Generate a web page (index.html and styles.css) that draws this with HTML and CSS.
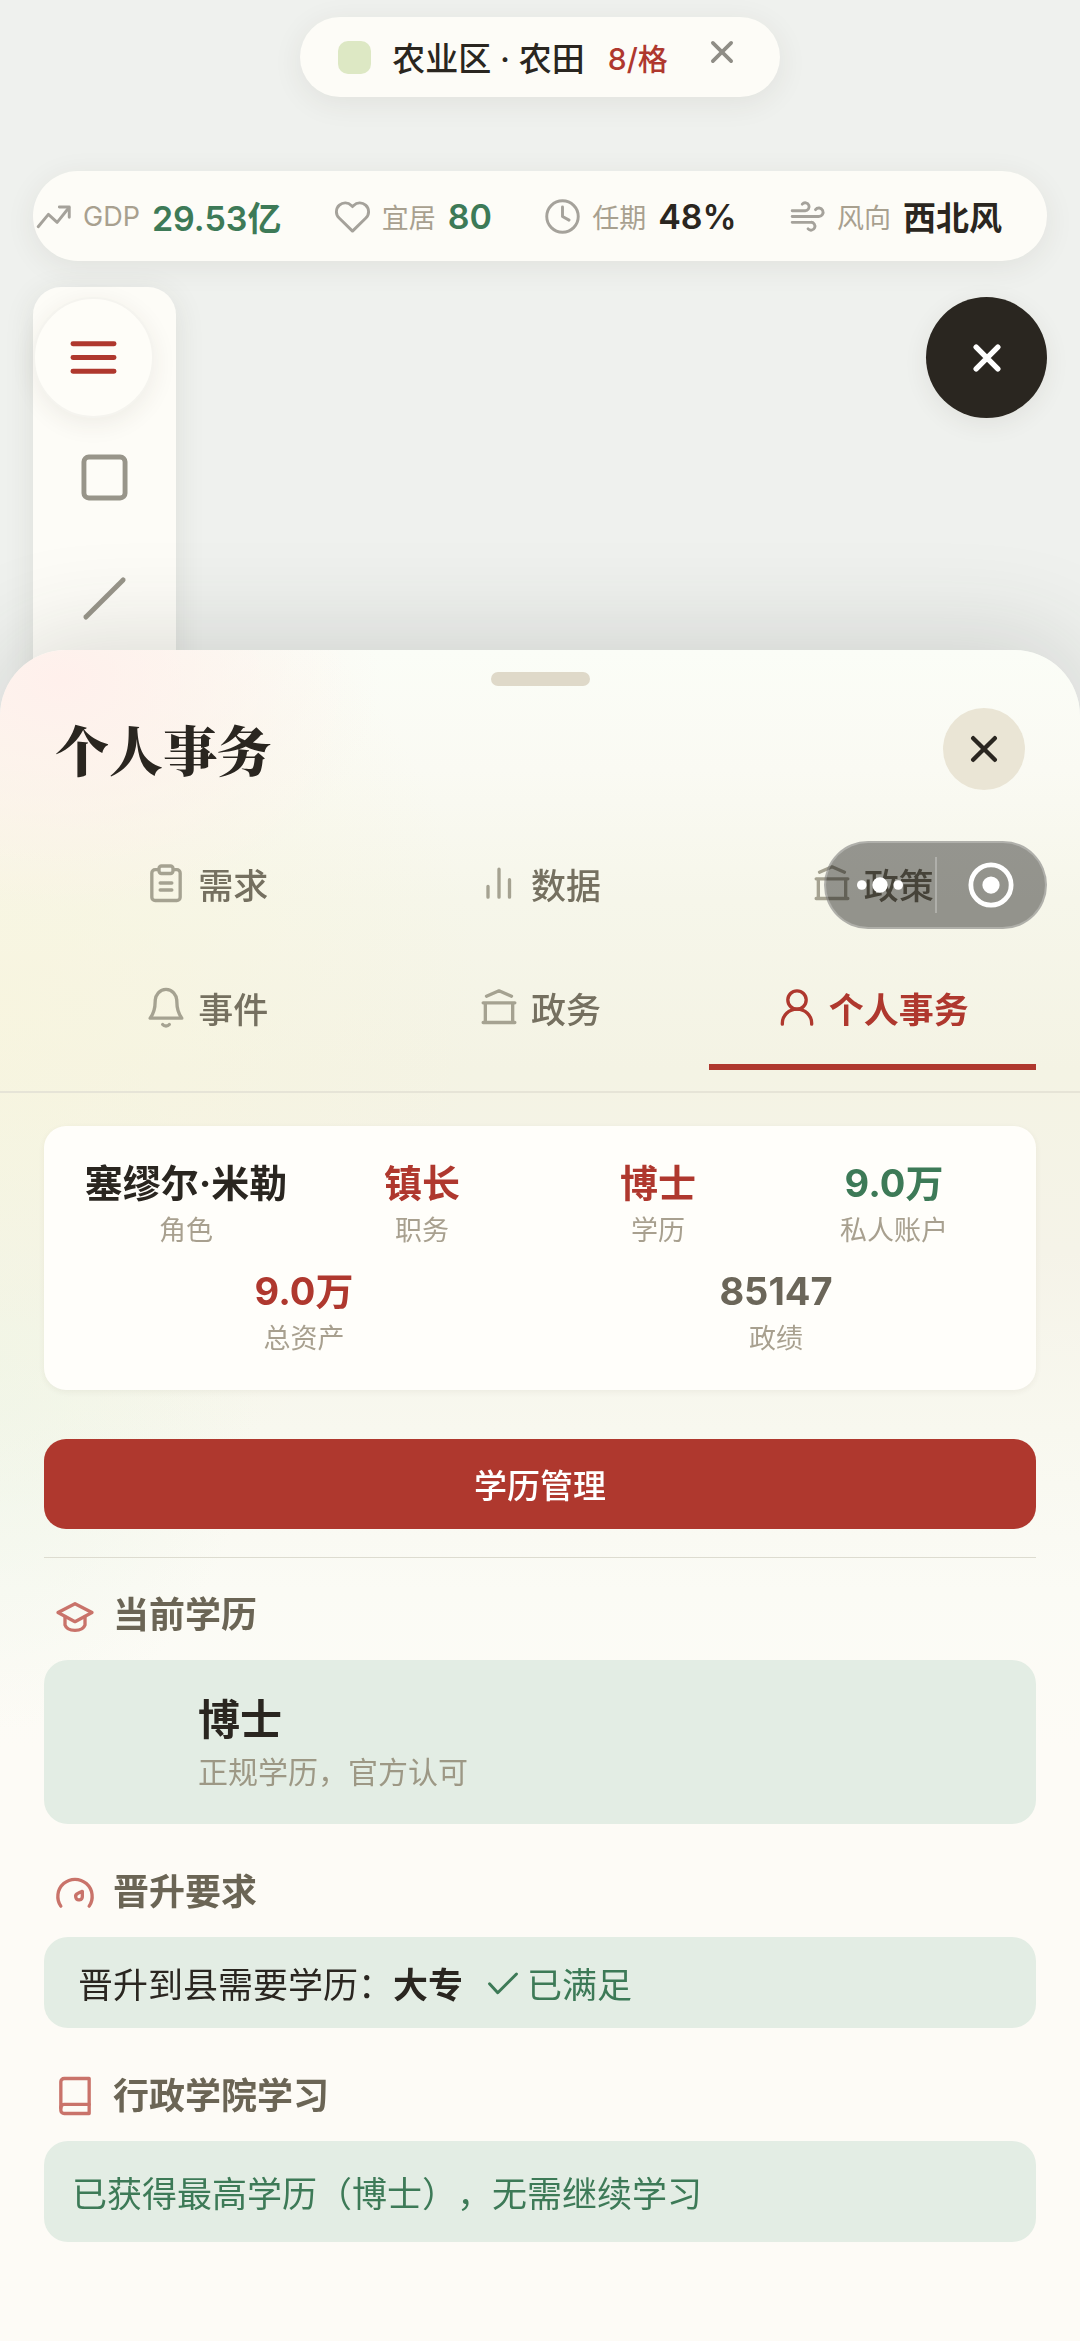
FILE: index.html
```html
<!DOCTYPE html>
<html lang="zh-CN">
<head>
    <meta charset="UTF-8">
    <meta name="viewport" content="width=device-width, initial-scale=1.0">
    <title>个人事务</title>
    <link rel="stylesheet" href="styles.css">
</head>
<body>
    <div class="toast">
        <span class="swatch"></span>
        <span class="toast-name">农业区 · 农田</span>
        <span class="toast-price">8/格</span>
        <button class="toast-close" aria-label="关闭提示">
            <svg viewBox="0 0 24 24"><path d="M2 2l20 20M22 2L2 22"/></svg>
        </button>
    </div>

    <header class="status-bar">
        <div class="status">
            <svg class="icon" viewBox="0 0 24 24"><path d="M1.500 19l7-8.500 6 5.500L22.500 6"/><path d="M16 5.500h6.800v7"/></svg>
            <span class="status-label">GDP</span>
            <strong class="green">29.53亿</strong>
        </div>
        <div class="status">
            <svg class="icon" viewBox="0 0 24 24"><path d="M12 22L3 13.200A6 6 0 0 1 3 4.200 6 6 0 0 1 11.200 4.400L12 5.200l.8-.8A6 6 0 0 1 21 4.200a6 6 0 0 1 0 9z"/></svg>
            <span class="status-label">宜居</span>
            <strong class="green">80</strong>
        </div>
        <div class="status">
            <svg class="icon" viewBox="0 0 24 24"><circle cx="12" cy="12" r="10.800"/><path d="M12 5.500V12l4.500 2.500"/></svg>
            <span class="status-label">任期</span>
            <strong>48%</strong>
        </div>
        <div class="status">
            <svg class="icon" viewBox="0 0 24 24"><path d="M1.500 8h8.800a2.700 2.700 0 1 0-1.900-4.500"/><path d="M1.500 12h18.300a2.900 2.900 0 1 0-2.300-4.700"/><path d="M1.500 16h12.800a2.700 2.700 0 1 1-1.900 4.500"/></svg>
            <span class="status-label">风向</span>
            <strong>西北风</strong>
        </div>
    </header>

    <main class="map">
        <button class="round menu-button" aria-label="菜单">
            <svg viewBox="0 0 48 48"><path d="M3 10h42M3 24h42M3 38h42"/></svg>
        </button>
        <div class="tools">
            <button class="tool" aria-label="矩形">
                <svg viewBox="0 0 48 48"><rect x="3" y="3" width="42" height="42" rx="5"/></svg>
            </button>
            <button class="tool" aria-label="直线">
                <svg viewBox="0 0 48 48"><path d="M5 43L43 5"/></svg>
            </button>
        </div>
        <button class="round exit-button" aria-label="退出">
            <svg viewBox="0 0 24 24"><path d="M2 2l20 20M22 2L2 22"/></svg>
        </button>
    </main>

    <section class="sheet">
        <div class="handle"></div>
        <div class="sheet-head">
            <h1>个人事务</h1>
            <button class="sheet-close" aria-label="关闭">
                <svg viewBox="0 0 24 24"><path d="M2 2l20 20M22 2L2 22"/></svg>
            </button>
        </div>

        <nav class="tabs">
            <button class="tab">
                <svg class="icon" viewBox="0 0 24 24"><rect x="3.500" y="4" width="17" height="18.500" rx="2"/><rect class="cover" x="7.800" y="1.800" width="8.400" height="4.500" rx="1.500"/><path d="M8.500 12h7M8.500 16.200h7"/></svg>
                需求
            </button>
            <button class="tab">
                <svg class="icon" viewBox="0 0 24 24"><path d="M5.400 14v6.500M12 3.700v16.800M18.300 10v10.500"/></svg>
                数据
            </button>
            <button class="tab">
                <svg class="icon" viewBox="0 0 24 24"><path d="M4.500 5.500L12 2.300l7.500 3.200M2.500 9.500h19M3.800 9.500v11.700M20.200 9.500v11.700M2.500 21.300h19"/></svg>
                政策
            </button>
            <button class="tab">
                <svg class="icon" viewBox="0 0 24 24"><path d="M2.500 18.700h19c-2.300-3-3-6-3-10a6.500 7.300 0 0 0-13 0c0 4-.7 7-3 10z"/><path d="M10 22.500c1 1.200 3 1.200 4 0"/></svg>
                事件
            </button>
            <button class="tab">
                <svg class="icon" viewBox="0 0 24 24"><path d="M4.500 5.500L12 2.300l7.500 3.200M2.500 9.500h19M3.800 9.500v11.700M20.200 9.500v11.700M2.500 21.300h19"/></svg>
                政务
            </button>
            <button class="tab active">
                <svg class="icon" viewBox="0 0 24 24"><circle cx="12" cy="7.800" r="5.500"/><path d="M3.200 22.300v-.5a8.800 8.500 0 0 1 17.600 0v.5"/></svg>
                个人事务
            </button>
        </nav>

        <div class="content">
            <div class="stats">
                <div class="stat"><strong>塞缪尔·米勒</strong><span>角色</span></div>
                <div class="stat"><strong class="red">镇长</strong><span>职务</span></div>
                <div class="stat"><strong class="red">博士</strong><span>学历</span></div>
                <div class="stat"><strong class="green">9.0万</strong><span>私人账户</span></div>
                <div class="stat"><strong class="red">9.0万</strong><span>总资产</span></div>
                <div class="stat"><strong class="gray">85147</strong><span>政绩</span></div>
            </div>

            <button class="primary">学历管理</button>

            <div class="details">
                <h2>
                    <svg class="icon" viewBox="0 0 24 24"><path d="M12 5.200L1.800 10.500 12 16l10.200-5.500z"/><path d="M6 13v5c1.500 4.300 10.500 4.300 12 0v-5"/></svg>
                    当前学历
                </h2>
                <div class="box degree">
                    <strong>博士</strong>
                    <span>正规学历，官方认可</span>
                </div>

                <h2>
                    <svg class="icon" viewBox="0 0 24 24"><path d="M3.500 20.500A10.300 10.300 0 1 1 20.500 20.500"/><path d="M16.400 11.600l-2.600 1.200a2 2 0 1 0 2.600 1.800z"/></svg>
                    晋升要求
                </h2>
                <div class="box requirement">
                    <span>晋升到县需要学历：<b>大专</b></span>
                    <span class="passed">
                        <svg class="icon" viewBox="0 0 24 24"><path d="M3 12.500l5.500 6L21 6"/></svg>
                        已满足
                    </span>
                </div>

                <h2>
                    <svg class="icon" viewBox="0 0 24 24"><path d="M5.500 1.500h15v21h-15a2 2 0 0 1-2-2v-17a2 2 0 0 1 2-2z"/><path d="M3.500 19a2 2 0 0 1 2-2h15"/></svg>
                    行政学院学习
                </h2>
                <div class="box study">已获得最高学历（博士），无需继续学习</div>
            </div>
        </div>
    </section>

    <!-- 小程序胶囊按钮 -->
    <div class="capsule">
        <button class="capsule-more" aria-label="更多">
            <svg viewBox="0 0 48 24"><circle cx="5" cy="12" r="5"/><circle cx="24" cy="12" r="8"/><circle cx="43" cy="12" r="5"/></svg>
        </button>
        <span class="capsule-line"></span>
        <button class="capsule-exit" aria-label="退出小程序">
            <svg viewBox="0 0 48 48"><circle class="ring" cx="24" cy="24" r="21"/><circle cx="24" cy="24" r="9"/></svg>
        </button>
    </div>
</body>
</html>
```
FILE: styles.css
```css
* {
    box-sizing: border-box;
}
body {
    margin: 0;
    min-height: 100vh;
    padding: 17px 33px 0;
    overflow: hidden;
    background-color: #eff1ee;
    color: #2a2620;
    font-family: Inter, "Noto Sans CJK SC", sans-serif;
    font-size: 35px;
    text-spacing-trim: space-all;
}
h1, h2 {
    margin: 0;
}
button {
    display: flex;
    align-items: center;
    justify-content: center;
    padding: 0;
    border: none;
    background: none;
    color: inherit;
    font: inherit;
    cursor: pointer;
}
svg {
    display: block;
    flex: none;
    overflow: visible;
    fill: none;
    stroke: currentColor;
    stroke-width: 2;
    stroke-linecap: round;
    stroke-linejoin: round;
}
.green {
    color: #3d7a57;
}
.red {
    color: #af382e;
}
.gray {
    color: #6b6659;
}

/* 顶部提示 */
.toast {
    display: flex;
    align-items: center;
    width: fit-content;
    height: 80px;
    margin: 0 auto;
    padding: 0 47px 0 38px;
    border-radius: 40px;
    background-color: #fdfcf7;
    box-shadow: 0 6px 30px rgba(60, 55, 40, 0.08);
}
.swatch {
    width: 33px;
    height: 33px;
    border-radius: 10px;
    background-color: #dde8c4;
}
.toast-name {
    margin-left: 21px;
    font-size: 33px;
    font-weight: 500;
}
.toast-price {
    margin-left: 23px;
    color: #af382e;
    font-size: 30px;
    font-weight: 500;
}
.toast-close {
    align-self: flex-start;
    margin: 24px 0 0 43px;
    color: #8f8d86;
}
.toast-close svg {
    width: 22px;
    height: 22px;
    stroke-width: 4;
}

/* 状态栏 */
.status-bar {
    display: flex;
    align-items: center;
    justify-content: space-between;
    height: 90px;
    margin-top: 74px;
    padding: 0 45px 0 3px;
    overflow: hidden;
    border-radius: 45px;
    background-color: #fdfcf7;
    box-shadow: 0 6px 30px rgba(60, 55, 40, 0.08);
}
.status {
    display: flex;
    align-items: center;
    gap: 12px;
    white-space: nowrap;
}
.status .icon {
    width: 35px;
    height: 35px;
    color: #a5a29b;
}
.status-label {
    color: #a8a08f;
    font-size: 27px;
}
.status strong {
    font-size: 34px;
    font-weight: 600;
}
.status:last-child strong {
    font-size: 33px;
}

/* 地图和工具 */
.map {
    display: flex;
    align-items: flex-start;
    justify-content: space-between;
    position: relative;
    margin-top: 26px;
}
.tools {
    width: 143px;
    height: 480px;
    padding-top: 130px;
    border-radius: 28px;
    background-color: #fdfcf7;
    box-shadow: 0 6px 30px rgba(60, 55, 40, 0.1);
}
.tool {
    width: 100%;
    height: 121px;
    color: #98958a;
}
.tool svg, .menu-button svg {
    width: 47px;
    height: 47px;
    stroke-width: 5;
}
.round {
    width: 121px;
    height: 121px;
    border-radius: 50%;
    box-shadow: 0 6px 24px rgba(60, 55, 40, 0.08);
}
.menu-button {
    position: absolute;
    top: 10px;
    left: 0;
    border: 2px solid #f5f4ef;
    background-color: #fefdf8;
    color: #af382e;
}
.exit-button {
    margin-top: 10px;
    background-color: #2a2620;
    color: #ffffff;
}
.exit-button svg, .sheet-close svg {
    width: 26px;
    height: 26px;
    stroke-width: 4;
}
.exit-button svg {
    stroke-width: 5;
}

/* 底部面板 */
.sheet {
    position: fixed;
    right: 0;
    bottom: 0;
    left: 0;
    padding: 22px 0 99px;
    border-radius: 66px 66px 0 0;
    background:
        radial-gradient(320px 230px at 60px 30px, #fff0ec 0%, rgba(255, 240, 236, 0) 100%),
        radial-gradient(480px 500px at 0 360px, rgba(248, 245, 222, 0.8) 0%, rgba(248, 245, 222, 0) 100%),
        radial-gradient(260px 360px at 0 720px, rgba(238, 245, 232, 0.8) 0%, rgba(238, 245, 232, 0) 100%),
        linear-gradient(#fbfdf7 0, #fafaf3 120px, #f6f6ea 250px, #f4f3e4 420px, #f5f3e8 600px, #f8f8ef 780px, #fbfbf5 940px, #fdfbf6 1100px);
    box-shadow: 0 -10px 100px rgba(50, 55, 50, 0.17);
}
.handle {
    width: 99px;
    height: 14px;
    margin: 0 auto;
    border-radius: 7px;
    background-color: #dfd9c9;
}
.sheet-head {
    display: flex;
    align-items: center;
    justify-content: space-between;
    height: 126px;
    padding: 0 55px;
}
h1 {
    font-family: "Noto Serif CJK SC", "Noto Serif SC", "Songti SC", "Noto Sans CJK SC", serif;
    font-size: 54px;
    font-weight: 900;
    line-height: 64px;
}
.sheet-close {
    width: 82px;
    height: 82px;
    border-radius: 50%;
    background-color: #eae5d5;
}
.tabs {
    display: grid;
    grid-template-columns: repeat(3, 1fr);
    gap: 6px;
    padding: 16px 44px 21px;
    border-bottom: 2px solid #e6e4d7;
}
.tab {
    gap: 12px;
    height: 118px;
    padding-bottom: 2px;
    border-bottom: 6px solid transparent;
    color: #757060;
    font-weight: 500;
}
.tab .icon {
    width: 40px;
    height: 40px;
    color: #a5a291;
}
.tab .cover {
    fill: #f7f6ea;
}
.tab.active {
    border-bottom-color: #af382e;
    color: #af382e;
    font-weight: 700;
}
.tab.active .icon {
    color: inherit;
}

.content {
    padding: 33px 44px 0;
}
.stats {
    display: flex;
    flex-wrap: wrap;
    row-gap: 16px;
    padding: 32px 24px;
    border-radius: 22px;
    background-color: #fffefa;
    box-shadow: 0 2px 6px rgba(60, 55, 40, 0.06);
}
.stat {
    display: flex;
    flex: 1 1 200px;
    flex-direction: column;
    align-items: center;
    gap: 4px;
    white-space: nowrap;
}
.stat strong {
    font-size: 38px;
    font-weight: 700;
    line-height: 50px;
}
.stat span {
    color: #a8a08f;
    font-size: 27px;
    line-height: 38px;
}
.primary {
    width: 100%;
    height: 90px;
    margin-top: 49px;
    border-radius: 22px;
    background-color: #af382e;
    color: #ffffff;
    font-size: 33px;
    font-weight: 500;
}

.details {
    margin-top: 28px;
    padding-top: 30px;
    border-top: 1px solid #dddcd0;
}
h2 {
    display: flex;
    align-items: center;
    gap: 18px;
    margin: 41px 0 18px;
    padding-left: 11px;
    color: #6b6555;
    font-size: 36px;
    font-weight: 700;
    line-height: 54px;
}
h2:first-child {
    margin-top: 0;
}
h2 .icon {
    width: 40px;
    height: 40px;
    color: #c9736a;
}
.box {
    display: flex;
    align-items: center;
    border-radius: 24px;
    background-color: #e3ede4;
}
.degree {
    flex-direction: column;
    align-items: flex-start;
    justify-content: center;
    height: 164px;
    padding-left: 154px;
}
.degree strong {
    font-size: 42px;
    font-weight: 600;
    line-height: 60px;
}
.degree span {
    color: #9d9885;
    font-size: 30px;
    line-height: 44px;
}
.requirement {
    gap: 22px;
    height: 91px;
    padding: 0 34px;
}
.passed {
    display: flex;
    align-items: center;
    gap: 6px;
    color: #3d7a57;
}
.passed .icon {
    width: 36px;
    height: 36px;
}
.study {
    height: 101px;
    padding: 0 28px;
    color: #3d7a57;
}

.capsule {
    display: flex;
    position: fixed;
    top: 841px;
    right: 33px;
    width: 223px;
    height: 88px;
    border: 2px solid rgba(255, 255, 255, 0.25);
    border-radius: 44px;
    background-color: rgba(0, 0, 0, 0.4);
    color: #ffffff;
}
.capsule button {
    flex: 1;
}
.capsule-more svg {
    width: 46px;
    height: 24px;
    fill: currentColor;
    stroke: none;
}
.capsule-exit svg {
    width: 46px;
    height: 46px;
    fill: currentColor;
    stroke: none;
}
.capsule-exit .ring {
    fill: none;
    stroke: currentColor;
    stroke-width: 5;
}
.capsule-line {
    width: 2px;
    margin: 14px 0;
    background-color: rgba(255, 255, 255, 0.25);
}
```
